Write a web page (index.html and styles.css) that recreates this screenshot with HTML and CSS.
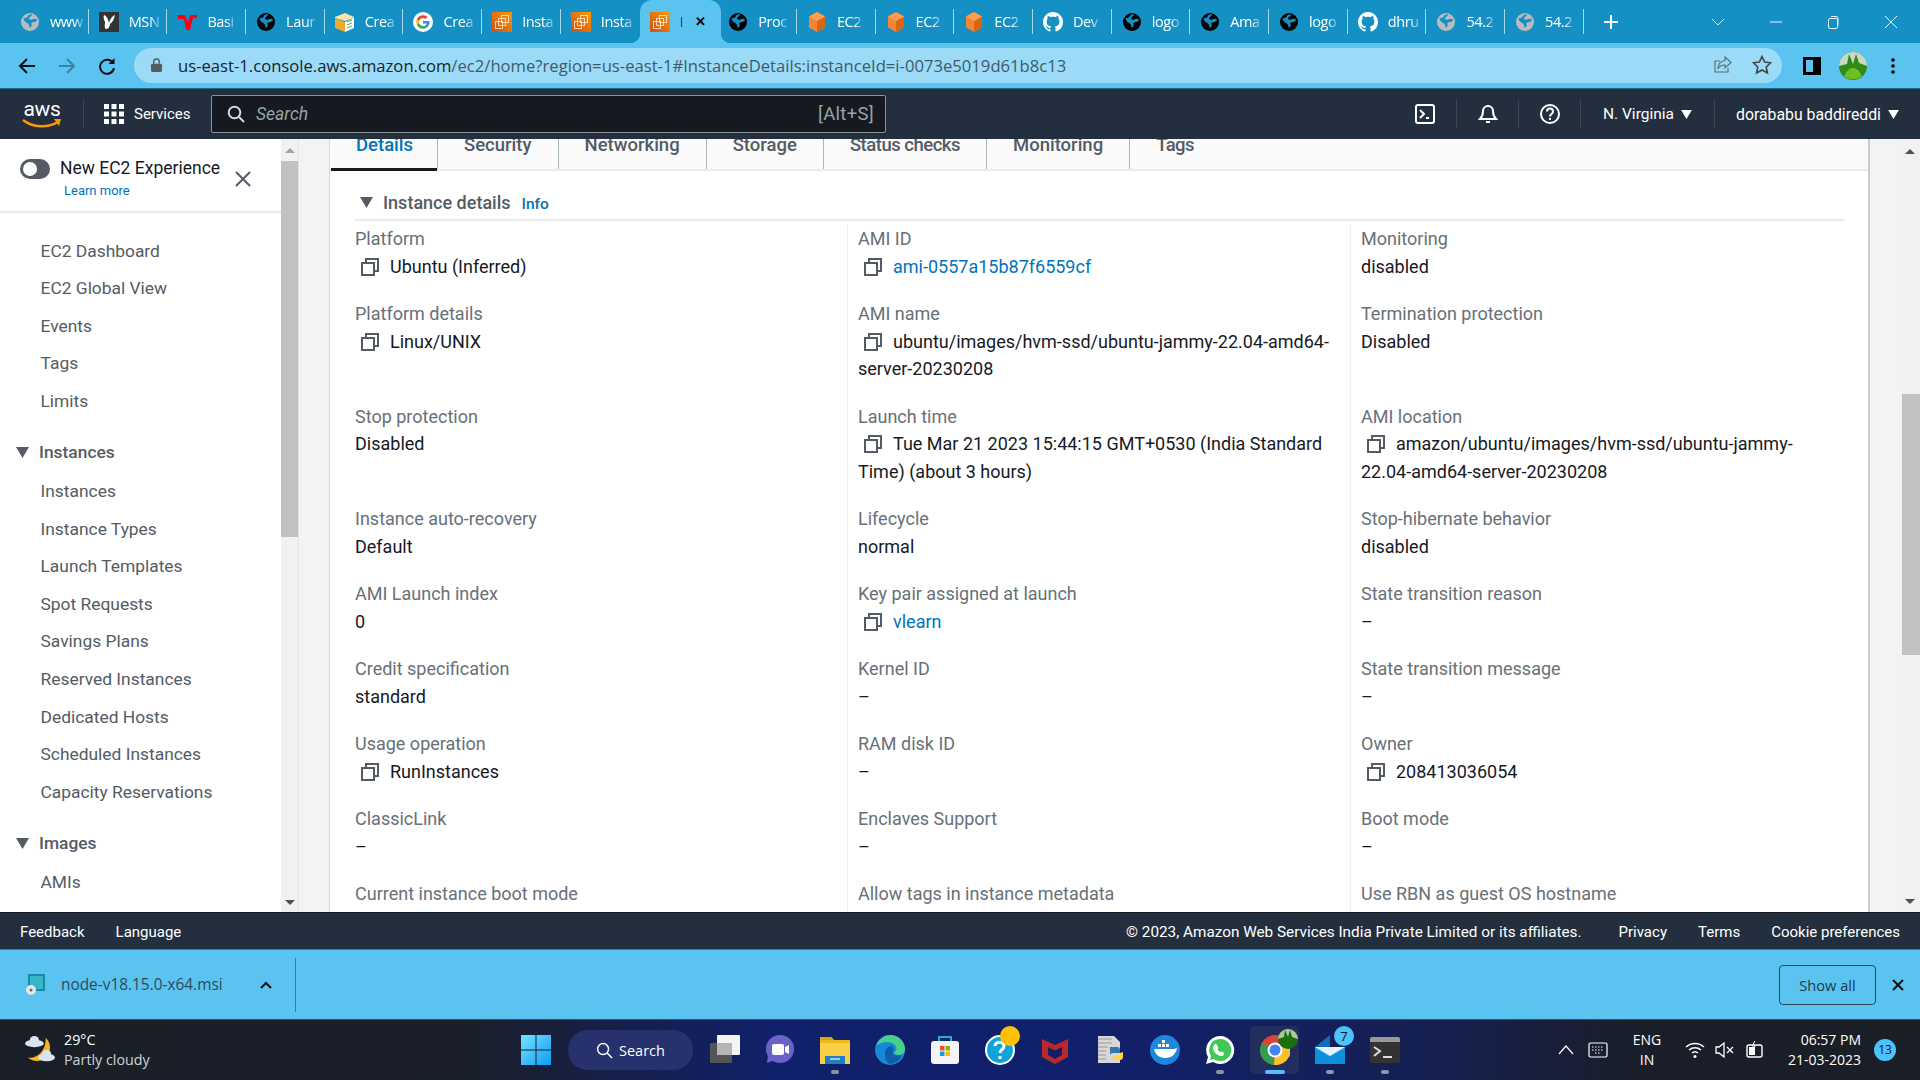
FILE: index.html
```html
<!DOCTYPE html>
<html lang="en">
<head>
<meta charset="utf-8">
<title>Instance details | EC2 Management Console</title>
<link rel="stylesheet" href="styles.css">
</head>
<body>
<svg class="defs" width="0" height="0" aria-hidden="true">
  <defs>
    <linearGradient id="ec2g" x1="0" y1="1" x2="1" y2="0"><stop offset="0" stop-color="#c8511b"/><stop offset="1" stop-color="#ff9900"/></linearGradient>
    <symbol id="globe" viewBox="0 0 20 20"><circle cx="10" cy="10" r="9" fill="currentColor"/><path d="M3.5 6c2 .5 3.5-.3 4.5-2 .8-1.3 2.5-2 4-1.7-.2 1.7-1.5 2.4-2.6 3.2-1.2 1 .2 2.3 1.8 2.2 2-.1 2.6-1.7 5.6-.4.3 1.700-.8 2.400-2.300 2.600-1.700.2-3.700.5-3 2.300.5 1.300 0 3-1.600 3.500-.8-1.500-.7-3.200-2-4.300C6.500 10.500 3.800 9.500 3.500 6z" fill="#1490c4"/></symbol>
    <symbol id="ec2" viewBox="0 0 20 20"><rect width="20" height="20" fill="url(#ec2g)"/><g fill="none" stroke="#fff" stroke-opacity=".7" stroke-width="1"><rect x="9.500" y="3.500" width="7" height="7"/><rect x="6.500" y="6.500" width="7" height="7"/><rect x="3.500" y="9.500" width="7" height="7"/></g></symbol>
    <symbol id="cube" viewBox="0 0 20 20"><path d="M10 0l8 4.500v11L10 20l-8-4.500v-11z" fill="#f58536"/><path d="M10 9l8-4.500v11L10 20z" fill="#d86613"/><path d="M10 0l8 4.500L10 9 2 4.500z" fill="#ff9d4f"/></symbol>
    <symbol id="gh" viewBox="0 0 16 16"><path fill="#fff" d="M8 0C3.580 0 0 3.580 0 8c0 3.540 2.290 6.530 5.470 7.590.4.070.55-.17.55-.38 0-.19-.01-.82-.01-1.490-2.010.37-2.530-.49-2.690-.94-.09-.23-.48-.94-.82-1.130-.28-.15-.68-.52-.01-.53.63-.01 1.080.58 1.230.82.720 1.210 1.870.87 2.330.66.070-.52.28-.87.51-1.070-1.780-.2-3.640-.89-3.640-3.950 0-.87.31-1.590.82-2.150-.08-.2-.36-1.020.08-2.120 0 0 .67-.21 2.200.82.64-.18 1.320-.27 2-.27.68 0 1.360.09 2 .27 1.530-1.040 2.200-.82 2.200-.82.44 1.100.16 1.920.08 2.120.51.56.82 1.270.82 2.150 0 3.070-1.870 3.750-3.650 3.950.29.25.54.73.54 1.480 0 1.070-.01 1.930-.01 2.200 0 .21.15.46.55.38A8.013 8.013 0 0016 8c0-4.420-3.580-8-8-8z"/></symbol>
    <symbol id="copy" viewBox="0 0 18 18"><g fill="none" stroke="#545b64" stroke-width="2"><rect x="1" y="5" width="12" height="12"/><path d="M5 5V1h12v12h-4"/></g></symbol>
    <symbol id="dn" viewBox="0 0 12 10"><path d="M0 0h12L6 10z" fill="currentColor"/></symbol>
  </defs>
</svg>

<div class="tabstrip">
  <div class="tab"><svg class="fav gray"><use href="#globe"/></svg><span class="tab-t">www</span></div>
  <div class="tab"><svg class="fav" viewBox="0 0 20 20"><rect width="20" height="20" fill="#333"/><path d="M5 3c3 1 4 4 5 8 1-3 2-6 6-8-1 4-2 7-5 9 0 3-2 5-4 5-2-1-1-5-1-7C5 8 4 5 5 3z" fill="#fff"/></svg><span class="tab-t">MSN</span></div>
  <div class="tab"><svg class="fav" viewBox="0 0 20 20"><path d="M0 3h8l3 7 2-7h7v3h-4l-3 12h-4L7 7H1z" fill="#f01"/></svg><span class="tab-t">Basi</span></div>
  <div class="tab"><svg class="fav dark"><use href="#globe"/></svg><span class="tab-t">Laur</span></div>
  <div class="tab"><svg class="fav" viewBox="0 0 20 20"><path d="M0 5l10-4 9 4v1l-9 3L0 6z" fill="#f7e6a8"/><path d="M0 6l10 4v10L0 16z" fill="#eeab2e"/><path d="M10 10l9-4v10l-9 4z" fill="#fff"/><path d="M12 10l5-2M12 13l5-2M12 16l5-2" stroke="#4a7" stroke-width="1"/></svg><span class="tab-t">Crea</span></div>
  <div class="tab"><svg class="fav" viewBox="0 0 20 20"><circle cx="10" cy="10" r="10" fill="#fff"/><path d="M16.500 10.200c0-.5 0-.9-.1-1.300H10v2.500h3.700c-.2.800-.6 1.500-1.300 2v1.600h2.100c1.200-1.100 2-2.800 2-4.800z" fill="#4285f4"/><path d="M10 16.700c1.800 0 3.300-.6 4.500-1.700l-2.100-1.600c-.6.4-1.400.6-2.400.6-1.800 0-3.300-1.200-3.800-2.800H4v1.700c1.100 2.200 3.400 3.800 6 3.800z" fill="#34a853"/><path d="M6.200 11.200c-.3-.8-.3-1.700 0-2.400V7.100H4c-.9 1.800-.9 4 0 5.800z" fill="#fbbc05"/><path d="M10 5.900c1 0 1.900.3 2.600 1l1.900-1.900C13.300 3.900 11.800 3.300 10 3.300c-2.600 0-4.900 1.500-6 3.800l2.200 1.700C6.700 7.100 8.200 5.900 10 5.900z" fill="#ea4335"/></svg><span class="tab-t">Crea</span></div>
  <div class="tab"><svg class="fav"><use href="#ec2"/></svg><span class="tab-t">Insta</span></div>
  <div class="tab tab-pre"><svg class="fav"><use href="#ec2"/></svg><span class="tab-t">Insta</span></div>
  <div class="tab tab-active"><svg class="fav"><use href="#ec2"/></svg><span class="tab-t">I</span><span class="tab-x">✕</span></div>
  <div class="tab"><svg class="fav dark"><use href="#globe"/></svg><span class="tab-t">Proc</span></div>
  <div class="tab"><svg class="fav"><use href="#cube"/></svg><span class="tab-t">EC2</span></div>
  <div class="tab"><svg class="fav"><use href="#cube"/></svg><span class="tab-t">EC2</span></div>
  <div class="tab"><svg class="fav"><use href="#cube"/></svg><span class="tab-t">EC2</span></div>
  <div class="tab"><svg class="fav"><use href="#gh"/></svg><span class="tab-t">Dev</span></div>
  <div class="tab"><svg class="fav dark"><use href="#globe"/></svg><span class="tab-t">logo</span></div>
  <div class="tab"><svg class="fav dark"><use href="#globe"/></svg><span class="tab-t">Ama</span></div>
  <div class="tab"><svg class="fav dark"><use href="#globe"/></svg><span class="tab-t">logo</span></div>
  <div class="tab"><svg class="fav"><use href="#gh"/></svg><span class="tab-t">dhru</span></div>
  <div class="tab"><svg class="fav gray"><use href="#globe"/></svg><span class="tab-t">54.2</span></div>
  <div class="tab"><svg class="fav gray"><use href="#globe"/></svg><span class="tab-t">54.2</span></div>
  <svg class="plus" viewBox="0 0 14 14"><path d="M7 0v14M0 7h14" stroke="#fff" stroke-width="2"/></svg>
  <div class="winctl">
    <svg class="wc" viewBox="0 0 14 14"><path d="M1 4l6 6 6-6" fill="none" stroke="#cfe9f5" stroke-width="1"/></svg>
    <svg class="wc" viewBox="0 0 14 14"><path d="M1 7h12" stroke="#e8f5fb" stroke-width="1"/></svg>
    <svg class="wc" viewBox="0 0 14 14"><rect x="2.500" y="3.500" width="9" height="10" rx="1.500" fill="none" stroke="#e8f5fb"/><path d="M5 1.500h5a2 2 0 012 2v7" fill="none" stroke="#e8f5fb"/></svg>
    <svg class="wc" viewBox="0 0 14 14"><path d="M1 1l12 12M13 1L1 13" stroke="#e8f5fb" stroke-width="1"/></svg>
  </div>
</div>

<div class="toolbar">
  <svg class="tb-ic" viewBox="0 0 18 18"><path d="M17 9H2M9 2L2 9l7 7" fill="none" stroke="#111" stroke-width="2"/></svg>
  <svg class="tb-ic" viewBox="0 0 18 18"><path d="M1 9h15M9 2l7 7-7 7" fill="none" stroke="#3f7f9e" stroke-width="2"/></svg>
  <svg class="tb-ic" viewBox="0 0 18 18"><path d="M15 6a7 7 0 101 5" fill="none" stroke="#111" stroke-width="2"/><path d="M16.500 1v6h-6z" fill="#111"/></svg>
  <div class="omnibox">
    <svg class="lock" viewBox="0 0 12 15"><path d="M3 6V4a3 3 0 016 0v2" fill="none" stroke="#555b63" stroke-width="1.500"/><rect y="6" width="12" height="9" rx="1.500" fill="#555b63"/></svg>
    <span class="url"><span class="url-host">us-east-1.console.aws.amazon.com</span>/ec2/home?region=us-east-1#InstanceDetails:instanceId=i-0073e5019d61b8c13</span>
    <svg class="omni-ic" viewBox="0 0 20 20"><path d="M12 2l6 5.500-6 5.500V10c-4 0-6 1.500-7 4 0-5 3-8 7-8.500zM15 13v4H2V6h5" fill="none" stroke="#5f6f78" stroke-width="1.200"/></svg>
    <svg class="omni-ic" viewBox="0 0 20 20"><path d="M10 1.500l2.600 5.600 6 .7-4.400 4.200 1.200 6L10 15l-5.400 3 1.200-6L1.400 7.800l6-.7z" fill="none" stroke="#3e454b" stroke-width="1.600"/></svg>
  </div>
  <svg class="panel-ic" viewBox="0 0 18 18"><rect x="1.500" y="1.500" width="15" height="15" fill="none" stroke="#000" stroke-width="3"/><rect x="10" y="2" width="6" height="14"/></svg>
  <svg class="avatar" viewBox="0 0 28 28"><circle cx="14" cy="14" r="14" fill="#2e8b16"/><path d="M0 14a14 14 0 0128 0L20 11l-3-9-3 10-4-10-2 10z" fill="#c7d9c4"/><path d="M5 24c4-7 6-8 9-8s6 2 9 8a14 14 0 01-18 0z" fill="#6cc022"/></svg>
  <svg class="menu-ic" viewBox="0 0 4 16"><circle cx="2" cy="2" r="1.800"/><circle cx="2" cy="8" r="1.800"/><circle cx="2" cy="14" r="1.800"/></svg>
</div>

<nav class="awsnav">
  <div class="aws-logo"><span class="aws-word">aws</span><svg class="aws-smile" viewBox="0 0 40 11"><path d="M1 2c10 8 25 8 35 2" fill="none" stroke="#f90" stroke-width="2.400"/><path d="M32 1l7 0-2 7z" fill="#f90"/></svg></div>
  <div class="services">
    <svg class="grid-ic" viewBox="0 0 20 20"><g fill="#fff"><rect width="5" height="5"/><rect x="7.500" width="5" height="5"/><rect x="15" width="5" height="5"/><rect y="7.500" width="5" height="5"/><rect x="7.500" y="7.500" width="5" height="5"/><rect x="15" y="7.500" width="5" height="5"/><rect y="15" width="5" height="5"/><rect x="7.500" y="15" width="5" height="5"/><rect x="15" y="15" width="5" height="5"/></g></svg>
    <span>Services</span>
  </div>
  <div class="searchbox">
    <svg class="search-ic" viewBox="0 0 18 18"><circle cx="7.500" cy="7.500" r="5.800" fill="none" stroke="#d5dbdb" stroke-width="2"/><path d="M12 12l5 5" stroke="#d5dbdb" stroke-width="2"/></svg>
    <span class="search-ph">Search</span>
    <span class="search-key">[Alt+S]</span>
  </div>
  <div class="nav-right">
    <div class="nav-cell nav-cell-first"><svg class="nav-ic" viewBox="0 0 20 20"><rect x="1" y="1" width="18" height="18" rx="2" fill="none" stroke="#fff" stroke-width="2"/><path d="M5 6l4 4-4 4" fill="none" stroke="#fff" stroke-width="2"/><path d="M11 14h3" stroke="#fff" stroke-width="2"/></svg></div>
    <div class="nav-cell"><svg class="nav-ic" viewBox="0 0 20 20"><path d="M10 2a5 5 0 015 5c0 5 3 8 3 8H2s3-3 3-8a5 5 0 015-5zM8 18h4" fill="none" stroke="#fff" stroke-width="2"/></svg></div>
    <div class="nav-cell"><svg class="nav-ic" viewBox="0 0 20 20"><circle cx="10" cy="10" r="9" fill="none" stroke="#fff" stroke-width="2"/><path d="M7 7.500c0-4 6-4 6 0 0 2.500-3 2.500-3 5M10 14v2" fill="none" stroke="#fff" stroke-width="2"/></svg></div>
    <div class="nav-cell nav-region"><span>N. Virginia</span><svg class="caret"><use href="#dn"/></svg></div>
    <div class="nav-cell nav-user"><span>dorababu baddireddi</span><svg class="caret"><use href="#dn"/></svg></div>
  </div>
</nav>

<div class="main">
  <aside class="sidebar">
    <div class="side-inner">
      <div class="newexp">
        <div class="toggle"><span class="knob"></span></div>
        <div class="newexp-text"><div class="newexp-title">New EC2 Experience</div><a class="newexp-link">Learn more</a></div>
        <svg class="newexp-x" viewBox="0 0 16 16"><path d="M1 1l14 14M15 1L1 15" stroke="#545b64" stroke-width="2"/></svg>
      </div>
      <ul class="side-list">
        <li>EC2 Dashboard</li>
        <li>EC2 Global View</li>
        <li>Events</li>
        <li>Tags</li>
        <li>Limits</li>
        <li class="side-head"><svg class="side-tri"><use href="#dn"/></svg>Instances</li>
        <li>Instances</li>
        <li>Instance Types</li>
        <li>Launch Templates</li>
        <li>Spot Requests</li>
        <li>Savings Plans</li>
        <li>Reserved Instances</li>
        <li>Dedicated Hosts</li>
        <li>Scheduled Instances</li>
        <li>Capacity Reservations</li>
        <li class="side-head"><svg class="side-tri"><use href="#dn"/></svg>Images</li>
        <li>AMIs</li>
      </ul>
    </div>
    <div class="vscroll vscroll-side"><span class="sb-up"></span><span class="sb-thumb sb-thumb-side"></span><span class="sb-dn"></span></div>
  </aside>
  <div class="gutter"></div>
  <section class="panel">
    <div class="dtabs">
      <span class="dtab dtab-active">Details</span>
      <span class="dtab">Security</span>
      <span class="dtab">Networking</span>
      <span class="dtab">Storage</span>
      <span class="dtab dtab-status">Status checks</span>
      <span class="dtab">Monitoring</span>
      <span class="dtab dtab-last">Tags</span>
    </div>
    <div class="panel-body">
      <h2 class="sec-title"><svg class="sec-tri"><use href="#dn"/></svg>Instance details<a class="info">Info</a></h2>
      <div class="grid">
        <div class="cell"><div class="lbl">Platform</div><div class="val"><svg class="copy"><use href="#copy"/></svg>Ubuntu (Inferred)</div></div>
        <div class="cell"><div class="lbl">AMI ID</div><div class="val"><svg class="copy"><use href="#copy"/></svg><a class="lnk">ami-0557a15b87f6559cf</a></div></div>
        <div class="cell"><div class="lbl">Monitoring</div><div class="val">disabled</div></div>

        <div class="cell"><div class="lbl">Platform details</div><div class="val"><svg class="copy"><use href="#copy"/></svg>Linux/UNIX</div></div>
        <div class="cell"><div class="lbl">AMI name</div><div class="val"><svg class="copy"><use href="#copy"/></svg>ubuntu/images/hvm-ssd/ubuntu-jammy-22.04-amd64-<br>server-20230208</div></div>
        <div class="cell"><div class="lbl">Termination protection</div><div class="val">Disabled</div></div>

        <div class="cell"><div class="lbl">Stop protection</div><div class="val">Disabled</div></div>
        <div class="cell"><div class="lbl">Launch time</div><div class="val"><svg class="copy"><use href="#copy"/></svg>Tue Mar 21 2023 15:44:15 GMT+0530 (India Standard<br>Time) (about 3 hours)</div></div>
        <div class="cell"><div class="lbl">AMI location</div><div class="val"><svg class="copy"><use href="#copy"/></svg>amazon/ubuntu/images/hvm-ssd/ubuntu-jammy-<br>22.04-amd64-server-20230208</div></div>

        <div class="cell"><div class="lbl">Instance auto-recovery</div><div class="val">Default</div></div>
        <div class="cell"><div class="lbl">Lifecycle</div><div class="val">normal</div></div>
        <div class="cell"><div class="lbl">Stop-hibernate behavior</div><div class="val">disabled</div></div>

        <div class="cell"><div class="lbl">AMI Launch index</div><div class="val">0</div></div>
        <div class="cell"><div class="lbl">Key pair assigned at launch</div><div class="val"><svg class="copy"><use href="#copy"/></svg><a class="lnk">vlearn</a></div></div>
        <div class="cell"><div class="lbl">State transition reason</div><div class="val">–</div></div>

        <div class="cell"><div class="lbl">Credit specification</div><div class="val">standard</div></div>
        <div class="cell"><div class="lbl">Kernel ID</div><div class="val">–</div></div>
        <div class="cell"><div class="lbl">State transition message</div><div class="val">–</div></div>

        <div class="cell"><div class="lbl">Usage operation</div><div class="val"><svg class="copy"><use href="#copy"/></svg>RunInstances</div></div>
        <div class="cell"><div class="lbl">RAM disk ID</div><div class="val">–</div></div>
        <div class="cell"><div class="lbl">Owner</div><div class="val"><svg class="copy"><use href="#copy"/></svg>208413036054</div></div>

        <div class="cell"><div class="lbl">ClassicLink</div><div class="val">–</div></div>
        <div class="cell"><div class="lbl">Enclaves Support</div><div class="val">–</div></div>
        <div class="cell"><div class="lbl">Boot mode</div><div class="val">–</div></div>

        <div class="cell"><div class="lbl">Current instance boot mode</div></div>
        <div class="cell"><div class="lbl">Allow tags in instance metadata</div></div>
        <div class="cell"><div class="lbl">Use RBN as guest OS hostname</div></div>
      </div>
    </div>
  </section>
  <div class="gutter-r"></div>
  <div class="vscroll vscroll-main"><span class="sb-up"></span><span class="sb-thumb sb-thumb-main"></span><span class="sb-dn"></span></div>
</div>

<footer class="awsfoot">
  <span>Feedback</span><span class="foot-lang">Language</span>
  <span class="foot-copy">© 2023, Amazon Web Services India Private Limited or its affiliates.</span>
  <span class="foot-link">Privacy</span><span class="foot-link">Terms</span><span class="foot-link">Cookie preferences</span>
</footer>

<div class="shelf">
  <svg class="msi" viewBox="0 0 20 22"><rect x="3" y="0" width="17" height="17" fill="#158aa8"/><rect x="5" y="2" width="13" height="13" fill="#35b6c9"/><circle cx="6" cy="16" r="5" fill="#e4e6e8"/><circle cx="6" cy="16" r="1.500" fill="#667"/></svg>
  <span class="dl-name">node-v18.15.0-x64.msi</span>
  <svg class="dl-caret" viewBox="0 0 12 8"><path d="M1 7l5-5 5 5" fill="none" stroke="#111" stroke-width="2"/></svg>
  <span class="dl-sep"></span>
  <button class="showall">Show all</button>
  <svg class="shelf-x" viewBox="0 0 12 12"><path d="M1 1l10 10M11 1L1 11" stroke="#111" stroke-width="2"/></svg>
</div>

<div class="taskbar">
  <div class="weather">
    <svg class="w-ic" viewBox="0 0 32 34"><path d="M22 4A13.500 13.500 0 113 25C13 27 23 17 22 4z" fill="#f9b51d"/><g fill="#d8e4f2"><ellipse cx="10" cy="10" rx="10" ry="4"/><circle cx="10" cy="7" r="5"/><ellipse cx="23" cy="25" rx="9" ry="4"/><circle cx="23" cy="22" r="5"/></g></svg>
    <div class="w-text"><div>29°C</div><div>Partly cloudy</div></div>
  </div>
  <div class="apps">
    <svg class="app app-win" viewBox="0 0 30 30"><defs><linearGradient id="wing" x1="0" y1="0" x2="1" y2="1"><stop offset="0" stop-color="#73e4ff"/><stop offset="1" stop-color="#0f9bf5"/></linearGradient></defs><path fill="url(#wing)" d="M0 0h14.500v14.500H0zM15.500 0H30v14.500H15.500zM0 15.500h14.500V30H0zM15.500 15.500H30V30H15.500z"/></svg>
    <div class="tsearch"><svg viewBox="0 0 18 18"><circle cx="7.500" cy="7.500" r="5.800" fill="none" stroke="#fff" stroke-width="1.600"/><path d="M12 12l5 5" stroke="#fff" stroke-width="1.600"/></svg><span>Search</span></div>
    <div class="slot"><svg class="app" viewBox="0 0 30 30"><rect x="0" y="8" width="22" height="20" rx="1" fill="#555"/><rect x="7" y="0" width="23" height="20" rx="1" fill="#f4f4f4"/><rect x="7" y="8" width="15" height="12" fill="#b5b5b5"/></svg></div>
    <div class="slot"><svg class="app" viewBox="0 0 30 30"><circle cx="15" cy="14" r="14" fill="#6b62c9"/><path d="M3 20l-1 8 8-3z" fill="#6b62c9"/><rect x="7" y="9" width="12" height="11" rx="2" fill="#fff"/><path d="M20 12l4-2v9l-4-2z" fill="#fff"/></svg></div>
    <div class="slot"><svg class="app" viewBox="0 0 30 30"><path d="M0 2h11l3 3h16v24H0z" fill="#f8cf45"/><path d="M0 2h11l3 3H0z" fill="#dca310"/><rect y="5" width="30" height="3" fill="#eeb81a"/><path d="M5 21h20v8H5z" fill="#1e7fc4"/><rect x="10" y="23" width="10" height="2" fill="#9cd"/></svg><span class="dot"></span></div>
    <div class="slot"><svg class="app" viewBox="0 0 30 30"><circle cx="15" cy="15" r="15" fill="#1787d8"/><path d="M1 11C4 4 9 0 15 0c8 0 15 6 15 14 0 3-2 6-6 6-3 0-5-1-5-3 3-1 3-4 1-7-4-4-14-4-19 1z" fill="#46d08c"/><path d="M10 19c0-5 3-8 7-8 2 2 2 5 0 7 2 3 6 3 10 2-2 5-7 9-12 9-4-2-5-6-5-10z" fill="#0f5ea8"/></svg></div>
    <div class="slot"><svg class="app" viewBox="0 0 30 30"><path d="M9 7V2h12v5" fill="none" stroke="#27a9e0" stroke-width="2"/><rect x="1" y="6" width="28" height="23" rx="3" fill="#f4f4f4"/><path fill="#f25022" d="M10 11h4.500v4.500H10z"/><path fill="#7fba00" d="M15.500 11H20v4.500h-4.500z"/><path fill="#00a4ef" d="M10 16.500h4.500V21H10z"/><path fill="#ffb900" d="M15.500 16.500H20V21h-4.500z"/></svg></div>
    <div class="slot"><svg class="app" viewBox="0 0 30 30"><circle cx="15" cy="15" r="14" fill="#0ea5dc" stroke="#fff" stroke-width="2"/><path d="M10 11c0-5 9-5 9 0 0 4-4 3-4 7M15 21v3" fill="none" stroke="#fff" stroke-width="3"/></svg><span class="ybadge"></span></div>
    <div class="slot"><svg class="app" viewBox="0 0 30 30"><path d="M2 4l13 6 13-6v18l-13 7-13-7z" fill="#b8282d"/><path d="M8 12l7 3.500 7-3.500v8l-7 4-7-4z" fill="#0f1f63"/></svg></div>
    <div class="slot"><svg class="app" viewBox="0 0 30 30"><path d="M3 1h16l6 6v21H3z" fill="#d7d7d7"/><path d="M3 4h14M3 8h14M3 12h10M3 16h8M3 20h8M3 24h8" stroke="#999" stroke-width="1"/><path d="M15 12h7a3 3 0 013 3v3h-7a3 3 0 00-3 3z" fill="#3776ab"/><path d="M28 17v5a3 3 0 01-3 3h-7v-4h7v-3z" fill="#ffd343"/></svg></div>
    <div class="slot"><svg class="app" viewBox="0 0 30 30"><circle cx="15" cy="15" r="15" fill="#1d87e0"/><path d="M4 14h20c1 0 2-1 3-1-1 6-5 10-12 10C9 23 5 19 4 14z" fill="#fff"/><path d="M8 9h3v3H8zM12 9h3v3h-3zM16 9h3v3h-3zM12 5h3v3h-3z" fill="#fff"/></svg></div>
    <div class="slot"><svg class="app" viewBox="0 0 30 30"><path d="M15 1a14 14 0 11-7 26L1 29l2-7A14 14 0 0115 1z" fill="#fff"/><path d="M15 4a11 11 0 11-6 20l-4 1 1-4A11 11 0 0115 4z" fill="#3fc854"/><path d="M10 9c2-1 2 2 3 3s-1 2 0 3 2 3 3 2 3 0 3 2c-1 3-4 2-6 1s-5-4-5-7c0-2 1-3 2-4z" fill="#fff"/></svg><span class="dot"></span></div>
    <div class="slot slot-on"><svg class="app" viewBox="0 0 30 30"><circle cx="15" cy="15" r="15" fill="#db4437"/><path d="M15 15L2 8A15 15 0 000 15a15 15 0 0014 15z" fill="#2e9e50"/><path d="M15 15l14-7a15 15 0 010 14 15 15 0 01-15 8z" fill="#fbc02d"/><circle cx="15" cy="15" r="7.500" fill="#fff"/><circle cx="15" cy="15" r="5.500" fill="#4285f4"/></svg><svg class="chr-avatar" viewBox="0 0 20 20"><circle cx="10" cy="10" r="10" fill="#1c6f10"/><path d="M0 10a10 10 0 0120 0l-6-2-2-7-2 7-3-7-1 7z" fill="#aac7a2"/></svg><span class="bar"></span></div>
    <div class="slot"><svg class="app" viewBox="0 0 30 30"><path d="M0 12L15 0v12z" fill="#0f6cbd"/><rect y="12" width="30" height="17" fill="#1e9be6"/><path d="M0 12h30L15 21z" fill="#e8f4fc"/><path d="M0 29V14l15 8 15-8v15z" fill="#0f8fd9"/></svg><span class="mailbadge">7</span><span class="dot"></span></div>
    <div class="slot"><svg class="app" viewBox="0 0 30 30"><rect y="2" width="30" height="26" rx="2" fill="#333"/><path d="M0 4a2 2 0 012-2h26a2 2 0 012 2v3H0z" fill="#999"/><path d="M4 12l6 4-6 5" fill="none" stroke="#ddd" stroke-width="2"/><path d="M13 22h9" stroke="#ddd" stroke-width="2"/></svg><span class="dot"></span></div>
  </div>
  <div class="tray">
    <svg class="t-caret" viewBox="0 0 16 10"><path d="M1 9l7-8 7 8" fill="none" stroke="#fff" stroke-width="1.200"/></svg>
    <svg class="t-kb" viewBox="0 0 20 16"><rect x="1" y="1" width="18" height="14" rx="1.500" fill="none" stroke="#fff" stroke-width="1.200"/><path d="M4 5h12M4 8h12M7 11h6" stroke="#fff" stroke-dasharray="1.500 1.500"/></svg>
    <div class="t-lang"><div>ENG</div><div>IN</div></div>
    <svg class="t-ic" viewBox="0 0 20 18"><path d="M1 6a13 13 0 0118 0M4 9a9 9 0 0112 0M7 12a4.500 4.500 0 016 0" fill="none" stroke="#fff" stroke-width="1.500"/><circle cx="10" cy="15.500" r="1.500" fill="#fff"/></svg>
    <svg class="t-ic" viewBox="0 0 20 18"><path d="M1 6h3l5-4v14l-5-4H1z" fill="none" stroke="#fff" stroke-width="1.300"/><path d="M12 6l6 6M18 6l-6 6" stroke="#fff" stroke-width="1.300"/></svg>
    <svg class="t-ic" viewBox="0 0 20 18"><rect x="2" y="4" width="15" height="12" rx="2" fill="none" stroke="#fff" stroke-width="1.400"/><rect x="4" y="6" width="6" height="8" fill="#fff"/><path d="M10 0L7 5h3L8 9" fill="none" stroke="#fff"/></svg>
    <div class="t-clock"><div>06:57 PM</div><div>21-03-2023</div></div>
    <span class="t-badge">13</span>
  </div>
</div>
</body>
</html>
```

FILE: styles.css
```css
* { box-sizing: border-box; }
html, body { margin: 0; padding: 0; }
body {
  width: 1920px; height: 1080px; overflow: hidden;
  display: flex; flex-direction: column;
  font-family: Roboto, "Liberation Sans", sans-serif;
  background: #fff;
}
.defs { position: absolute; }

/* browser tab strip */
.tabstrip {
  height: 43px; flex: none; background: #1490c4;
  display: flex; align-items: center; padding-left: 10px;
  font-family: "Open Sans", sans-serif;
}
.tab {
  width: 78.7px; height: 25px; flex: none; position: relative;
  display: flex; align-items: center; padding-left: 10px;
  border-right: 1px solid #a9d6ea; color: #fff;
}
.tab-pre { border-right: none; }
.fav { width: 20px; height: 20px; flex: none; }
.gray { color: #b9bcbe; }
.dark { color: #000; }
.tab-t {
  margin-left: 10px; white-space: nowrap;
  font-size: 14.500px; letter-spacing: -.4px;
  -webkit-mask-image: linear-gradient(90deg, #000 70%, rgba(0,0,0,.35));
  mask-image: linear-gradient(90deg, #000 70%, rgba(0,0,0,.35));
}
.tab-active {
  height: 43px; margin-top: 0; border: none; width: 81px; margin-right: -2.3px;
  background: #5bc3f0; border-radius: 12px 12px 0 0; color: #24505f; z-index: 1;
}
.tab-active::before, .tab-active::after {
  content: ""; position: absolute; bottom: 0; width: 10px; height: 10px;
}
.tab-active::before { left: -10px; background: radial-gradient(circle at 0 0, transparent 10px, #5bc3f0 10.5px); }
.tab-active::after { right: -10px; background: radial-gradient(circle at 100% 0, transparent 10px, #5bc3f0 10.5px); }
.tab-x { font-size: 13px; color: #000; margin-left: 12px; font-weight: 700; line-height: 1; }
.plus { width: 14px; height: 14px; margin-left: 20px; flex: none; }
.winctl { margin-left: auto; display: flex; align-items: center; }
.wc { width: 14px; height: 14px; margin-right: 43.700px; flex: none; }
.winctl .wc:last-child { margin-right: 22px; }

/* browser toolbar */
.toolbar {
  height: 45px; flex: none; background: #5bc3f0;
  display: flex; align-items: center; padding-left: 18px;
}
.tb-ic { width: 18px; height: 18px; flex: none; margin-right: 22px; }
.omnibox {
  margin-left: -4px; width: 1648px; height: 35px; flex: none;
  background: #9bdbf7; border-radius: 18px; margin-top: -1px;
  display: flex; align-items: center; padding-left: 17px;
}
.lock { width: 11px; height: 14px; flex: none; }
.url {
  margin-left: 16px; font-family: "Open Sans", sans-serif; font-size: 16.650px;
  color: #3f5a6a; white-space: nowrap; flex: 1;
}
.url-host { color: #16242e; }
.omni-ic { width: 20px; height: 20px; flex: none; margin-right: 19px; margin-left: 3px; }
.omni-ic:last-child { margin: 0 10px 0 0; }
.panel-ic { width: 18px; height: 18px; flex: none; margin-left: 21px; }
.avatar { width: 28px; height: 28px; flex: none; margin-left: 18px; }
.menu-ic { width: 4px; height: 16px; flex: none; margin-left: 24px; }

/* aws console bar */
.awsnav {
  height: 51px; flex: none; background: #232f3e; color: #fff;
  display: flex; align-items: center; padding-left: 22px;
  font-size: 15.500px; border-top: 1px solid #1f6a8a;
}
.aws-logo { width: 40px; height: 30px; position: relative; flex: none; }
.aws-word { display: block; font-size: 21px; line-height: 20px; text-align: center; letter-spacing: -.3px; }
.aws-smile { position: absolute; left: 0; bottom: 0; width: 40px; height: 11px; }
.services {
  margin-left: 21px; height: 28px; padding-left: 20px; flex: none; font-size: 15px;
  border-left: 1px solid #414750; display: flex; align-items: center; gap: 10px; width: 128px;
}
.grid-ic { width: 20px; height: 20px; flex: none; }
.searchbox {
  width: 675px; height: 38px; flex: none; background: #16191f;
  border: 1px solid #879596; border-radius: 2px;
  display: flex; align-items: center; padding: 0 11px 0 15px;
}
.search-ic { width: 18px; height: 18px; flex: none; }
.search-ph { margin-left: 11px; font-style: italic; color: #95a5a6; font-size: 17.500px; }
.search-key { margin-left: auto; color: #95a5a6; font-size: 18.500px; letter-spacing: .3px; }
.nav-right { margin-left: auto; display: flex; align-items: center; }
.nav-cell {
  height: 28px; width: 62px; flex: none; display: flex; align-items: center;
  justify-content: center; border-left: 1px solid #414750;
}
.nav-cell-first { border-left: none; }
.nav-ic { width: 20px; height: 20px; }
.nav-region { width: 134px; gap: 7px; }
.nav-user { width: 206px; gap: 7px; font-size: 15.800px; }
.caret { width: 11px; height: 9px; color: #fff; }

/* main area */
.main { flex: 1; min-height: 0; display: flex; overflow: hidden; background: #f2f3f3; }
.sidebar { width: 298px; flex: none; display: flex; background: #fff; }
.side-inner { width: 281px; flex: none; overflow: hidden; }
.newexp {
  height: 74px; display: flex; border-bottom: 2px solid #eaeded; padding: 15px 0 0 20px; position: relative;
}
.toggle { width: 30px; height: 20px; border-radius: 10px; background: #545b64; flex: none; margin-top: 5px; position: relative; }
.knob { position: absolute; left: 3px; top: 3px; width: 14px; height: 14px; border-radius: 50%; background: #fff; }
.newexp-text { margin-left: 10px; }
.newexp-title { font-size: 17.500px; line-height: 28px; color: #16191f; }
.newexp-link { display: block; margin-left: 4px; font-size: 13px; line-height: 18px; color: #0073bb; }
.newexp-x { position: absolute; left: 235px; top: 32px; width: 16px; height: 16px; }
.side-list { list-style: none; margin: 0; padding: 19.500px 0 0 40.500px; font-size: 17.400px; color: #545b64; }
.side-list li { height: 37.600px; line-height: 37.600px; white-space: nowrap; }
.side-list .side-head { font-weight: 500; margin: 14px 0 1px -24.500px; padding-left: 23px; position: relative; }
.side-tri { position: absolute; left: 0; top: 13px; width: 13px; height: 11px; color: #545b64; }

.vscroll { width: 17px; flex: none; background: #f1f1f1; position: relative; height: 100%; }
.sb-up, .sb-dn { position: absolute; left: 4px; width: 0; height: 0; border-left: 5px solid transparent; border-right: 5px solid transparent; }
.sb-up { top: 9px; border-bottom: 5px solid #a3a3a3; }
.sb-dn { bottom: 7px; border-top: 5px solid #505050; }
.sb-thumb { position: absolute; left: 0; width: 100%; background: #c1c1c1; }
.sb-thumb-side { top: 22px; height: 376px; }
.sb-thumb-main { top: 255px; height: 261px; }
.vscroll-main { width: 18px; background: #f1f1f1; }
.vscroll-main .sb-up { border-bottom-color: #505050; top: 10px; left: 3px; }
.vscroll-main .sb-dn { bottom: 8px; left: 3px; }

.gutter { width: 31px; flex: none; border-left: 1px solid #e4e6e6; background: #f2f3f3; }
.gutter-r { width: 32px; flex: none; background: #f2f3f3; }

.panel {
  width: 1541px; flex: none; background: #fff; overflow: hidden;
  border-left: 1px solid #d5dbdb; border-right: 2px solid #c8cccc;
}
.dtabs {
  height: 32px; background: #fafafa; border-bottom: 2px solid #eaeded; display: flex; padding-left: 1px;
  font-size: 18.500px; font-weight: 500; color: #545b64;
}
.dtab {
  height: 30px; line-height: 12px; padding: 0 26px; border-right: 1px solid #aab7b8; white-space: nowrap;
  display: block; position: relative;
}
.dtab-last { border-right: none; letter-spacing: -.6px; }
.dtab-status { letter-spacing: -.5px; }
.dtab-active { color: #0073bb; width: 107px; padding: 0 0 0 25px; border-right-color: #aab7b8; }
.dtab-active::after { content: ""; position: absolute; left: 0; right: 0; bottom: -2px; height: 3px; background: #16191f; }
.panel-body { padding: 0 24px 0 25px; }
.sec-title {
  margin: 0; height: 50px; display: flex; align-items: center; border-bottom: 2px solid #eaeded;
  font-size: 18px; font-weight: 500; color: #545b64; padding-top: 15px;
}
.sec-tri { width: 13px; height: 11px; margin: 0 10px 0 5px; color: #545b64; }
.info { font-size: 15.500px; color: #0073bb; margin-left: 11px; padding-top: 2px; }
.grid { display: grid; grid-template-columns: 493px 503px 1fr; padding-top: 4px; }
.cell { padding: 0 0 20px 10px; border-right: 1px solid #eaeded; font-size: 18px; line-height: 27.500px; }
.cell:nth-child(3n+1) { padding-left: 0; }
.cell:nth-child(3n) { border-right: none; }
.lbl { color: #687078; white-space: nowrap; }
.val { color: #16191f; white-space: nowrap; }
.copy { width: 18px; height: 18px; margin: 0 11px 0 6px; vertical-align: -3px; }
.lnk { color: #0073bb; }

/* aws footer */
.awsfoot {
  height: 37px; flex: none; background: #232f3e; color: #fff; display: flex; align-items: center;
  padding: 1px 20px 0; font-size: 15px; border-top: 1px solid #16191f;
}
.foot-lang { margin-left: 31px; }
.foot-copy { margin-left: auto; margin-right: 6px; font-size: 15.300px; }
.foot-link { margin-left: 31px; }

/* download shelf */
.shelf {
  height: 71px; flex: none; background: #5bc3f0; display: flex; align-items: center;
  padding-left: 25px; font-family: "Open Sans", sans-serif; border-top: 1px solid #3c7d9c;
  border-bottom: 1px solid #2d5468;
}
.msi { width: 20px; height: 22px; flex: none; }
.dl-name { margin-left: 16px; width: 199px; font-size: 15.400px; color: #2f4a58; white-space: nowrap; }
.dl-caret { width: 12px; height: 8px; flex: none; }
.dl-sep { width: 1px; height: 54px; background: #3c7d9c; margin-left: 23px; }
.showall {
  margin-left: auto; width: 97px; height: 40px; background: transparent; border: 1px solid #28485a; border-radius: 4px;
  font: 14.600px "Open Sans", sans-serif; color: #1d3b4a;
}
.shelf-x { width: 12px; height: 12px; margin: 0 16px 0 16px; flex: none; }

/* windows taskbar */
.taskbar {
  height: 60px; flex: none; color: #fff; display: grid; grid-template-columns: 518px auto 1fr; align-items: center;
  background: linear-gradient(90deg, #1a1f27 0, #1a1f2c 25%, #11206a 40%, #12206a 60%, #15204f 75%, #1a1e2a 85%, #1a1e26 100%);
  font-family: "Open Sans", sans-serif; font-size: 14px;
}
.weather { display: flex; align-items: center; padding-left: 25px; gap: 9px; }
.w-ic { width: 30px; height: 32px; flex: none; }
.w-text { line-height: 20px; font-size: 14.300px; }
.w-text div + div { color: #cfd3d8; }
.apps { display: flex; align-items: center; }
.app { width: 30px; height: 30px; flex: none; display: block; }
.app-win { width: 30px; margin-left: 3px; }
.tsearch {
  margin-left: 17px; width: 125px; height: 40px; border-radius: 20px; background: #26316e;
  display: flex; align-items: center; justify-content: center; gap: 6px; margin-right: 4px; font-size: 14.500px;
}
.tsearch svg { width: 17px; height: 17px; }
.slot { width: 55px; height: 48px; display: flex; align-items: center; justify-content: center; position: relative; flex: none; }
.dot { position: absolute; left: 50%; margin-left: -4px; bottom: 0; width: 8px; height: 4px; border-radius: 2px; background: #8d93a8; }
.slot-on { background: #232e5e; border-radius: 5px; width: 49px; margin: 0 3px; }
.bar { position: absolute; left: 50%; margin-left: -10px; bottom: 0; width: 20px; height: 4px; border-radius: 2px; background: #4cc2ff; }
.ybadge { position: absolute; right: 7px; top: 0; width: 20px; height: 20px; border-radius: 50%; background: #ffc107; }
.chr-avatar { position: absolute; right: 1px; top: 3px; width: 20px; height: 20px; }
.mailbadge { position: absolute; right: 3px; top: 0; width: 20px; height: 20px; border-radius: 50%; background: #4cc2ff; color: #111; font-size: 13px; line-height: 20px; text-align: center; }
.tray { display: flex; align-items: center; justify-content: flex-end; padding-right: 24px; }
.t-caret { width: 16px; height: 10px; flex: none; }
.t-kb { width: 20px; height: 16px; flex: none; margin-left: 14px; margin-right: -1px; }
.t-lang { width: 50px; margin-left: 15px; text-align: center; line-height: 20px; }
.t-ic { width: 20px; height: 18px; margin-left: 10px; flex: none; }
.t-lang + .t-ic { margin-left: 13px; }
.t-clock { width: 90px; margin-left: 6px; text-align: right; line-height: 20px; }
.t-badge { width: 22px; height: 22px; border-radius: 50%; background: #4cc2ff; color: #111; font-size: 12px; line-height: 22px; text-align: center; margin-left: 13px; }
```
